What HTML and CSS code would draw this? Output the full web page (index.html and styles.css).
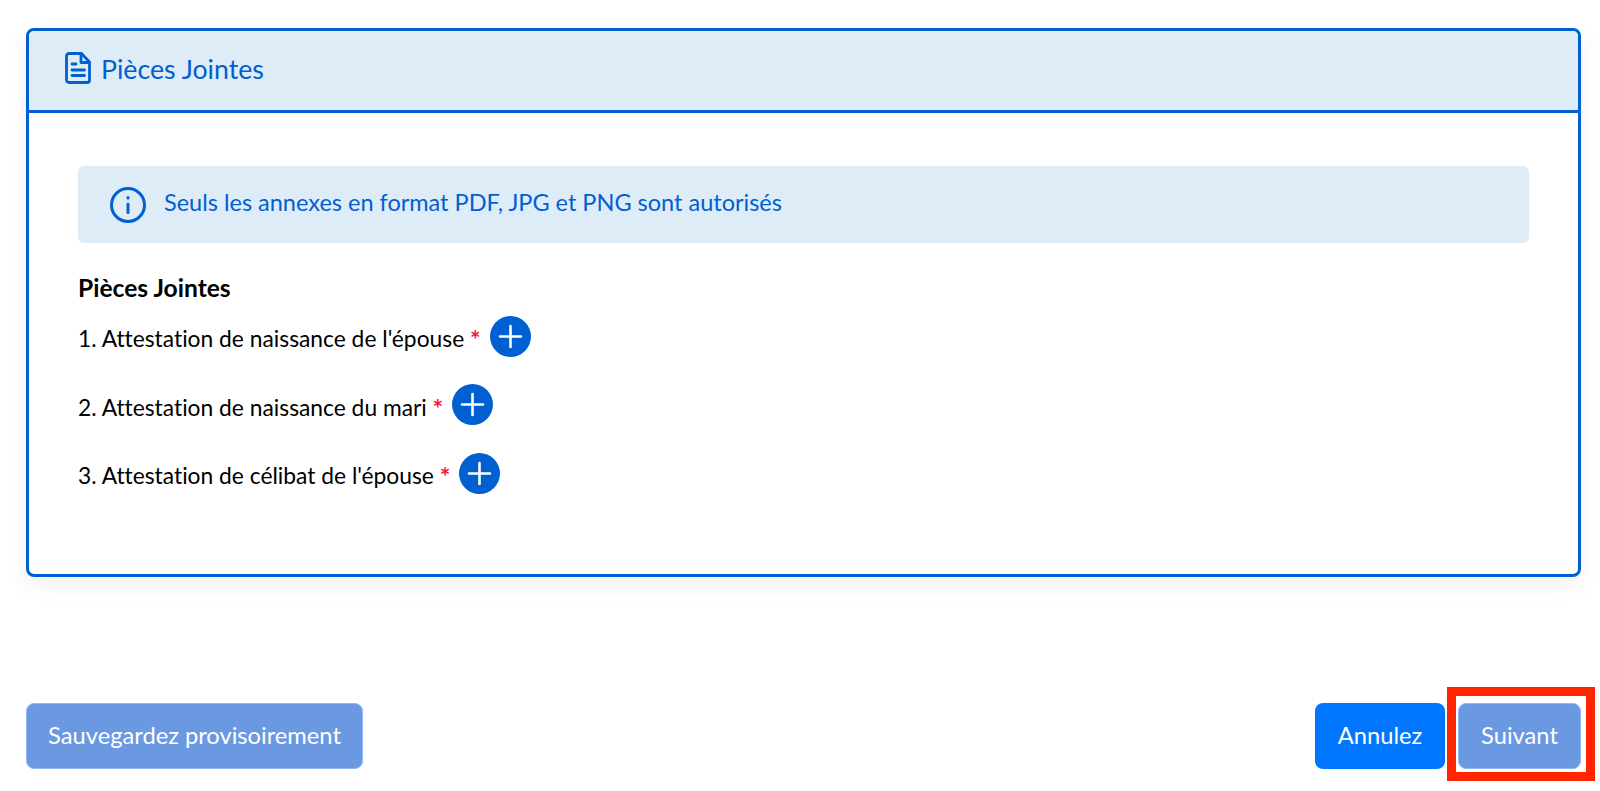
FILE: index.html
```html
<!DOCTYPE html>
<html lang="fr">
<head>
    <meta charset="UTF-8">
    <meta name="viewport" content="width=device-width, initial-scale=1.0">
    <title>Pièces Jointes</title>
    <link rel="stylesheet" href="styles.css">
</head>
<body>
    <div class="card">
        <div class="card-header">
            <svg class="doc-icon" width="26" height="32" viewBox="0 0 26 32" fill="none" stroke="#0060d1" stroke-width="2.8" stroke-linecap="round" stroke-linejoin="round">
                <path d="M4 1.500h12.500L24.500 10v18a2.500 2.500 0 0 1-2.500 2.500H4A2.500 2.500 0 0 1 1.500 28V4A2.500 2.500 0 0 1 4 1.500z"/>
                <path d="M16 2v8.500h8"/>
                <path d="M7 12h4M7 18h12.500M7 23.500h12.500"/>
            </svg>
            <span class="card-title">Pièces Jointes</span>
        </div>
        <div class="card-body">
            <div class="alert">
                <svg class="info-icon" width="38" height="38" viewBox="0 0 38 38" fill="none" stroke="#0060d1" stroke-width="3" stroke-linecap="round">
                    <circle cx="19" cy="19" r="16.500"/>
                    <path d="M19 18v8.500"/>
                    <path d="M19 11.500v.5"/>
                </svg>
                <span class="alert-text">Seuls les annexes en format PDF, JPG et PNG sont autorisés</span>
            </div>
            <h2 class="section-title">Pièces Jointes</h2>
            <ul class="attachments">
                <li><span>1. Attestation de naissance de l'épouse <em>*</em></span><button class="add-btn" aria-label="Ajouter"><svg width="25" height="25" viewBox="0 0 25 25" stroke="#fff" stroke-width="2.600" stroke-linecap="round"><path d="M12.500 2v21M2 12.500h21"/></svg></button></li>
                <li><span>2. Attestation de naissance du mari <em>*</em></span><button class="add-btn" aria-label="Ajouter"><svg width="25" height="25" viewBox="0 0 25 25" stroke="#fff" stroke-width="2.600" stroke-linecap="round"><path d="M12.500 2v21M2 12.500h21"/></svg></button></li>
                <li><span>3. Attestation de célibat de l'épouse <em>*</em></span><button class="add-btn" aria-label="Ajouter"><svg width="25" height="25" viewBox="0 0 25 25" stroke="#fff" stroke-width="2.600" stroke-linecap="round"><path d="M12.500 2v21M2 12.500h21"/></svg></button></li>
            </ul>
        </div>
    </div>
    <div class="footer">
        <button class="btn btn-muted btn-save">Sauvegardez provisoirement</button>
        <div class="footer-right">
            <button class="btn btn-primary btn-cancel">Annulez</button>
            <div class="highlight">
                <button class="btn btn-muted btn-next">Suivant</button>
            </div>
        </div>
    </div>
</body>
</html>
```

FILE: styles.css
```css
body {
    font-family: Lato, "Open Sans", Arial, sans-serif;
    font-variant-ligatures: none;
    background-color: #fff;
    color: #000;
    margin: 0;
    padding: 28px 19px 0 26px;
    height: 791px;
    box-sizing: border-box;
    overflow: hidden;
}
.card {
    height: 549px;
    box-sizing: border-box;
    border: 3px solid #0060d1;
    border-radius: 8px;
    box-shadow: 0 8px 24px rgba(0, 0, 0, 0.06);
    overflow: hidden;
}
.card-header {
    height: 82px;
    box-sizing: border-box;
    display: flex;
    align-items: center;
    gap: 10px;
    padding: 0 0 3px 36px;
    background: #deecf8;
    border-bottom: 3px solid #0060d1;
}
.doc-icon {
    flex-shrink: 0;
    margin-top: -3px;
}
.card-title {
    font-size: 26.700px;
    color: #0060d1;
}
.card-body {
    padding: 53px 49px 0;
}
.alert {
    height: 77px;
    display: flex;
    align-items: center;
    gap: 17px;
    padding-left: 31px;
    background: #deecf8;
    border-radius: 6px;
    color: #0060d1;
    font-size: 23.500px;
}
.alert-text {
    margin-bottom: 6px;
}
.info-icon {
    flex-shrink: 0;
}
.section-title {
    font-size: 24.600px;
    font-weight: 700;
    margin: 30px 0 0;
    line-height: 30px;
}
.attachments {
    list-style-type: none;
    margin: 0;
    padding: 1px 0 0;
    font-size: 22.800px;
}
.attachments li {
    height: 68.500px;
    display: flex;
    align-items: center;
    gap: 9px;
}
.attachments em {
    color: #f5133f;
    font-style: normal;
    font-weight: 700;
    font-size: 25px;
    line-height: 1;
    vertical-align: -2px;
}
.add-btn {
    width: 41px;
    height: 41px;
    padding: 0;
    border: none;
    border-radius: 50%;
    background-color: #0060d1;
    display: flex;
    align-items: center;
    justify-content: center;
    margin-top: -4px;
}
.footer {
    display: flex;
    justify-content: space-between;
    margin-top: 126px;
}
.footer-right {
    display: flex;
    gap: 13px;
}
.btn {
    height: 66px;
    border-radius: 8px;
    color: #fff;
    font-family: inherit;
    font-size: 23.700px;
    padding: 0 0 2px;
    cursor: pointer;
}
.btn-muted {
    background-color: #6a99e2;
    border: 1px solid #8fbaf5;
}
.btn-primary {
    background-color: #0177ff;
    border: none;
}
.btn-save {
    width: 337px;
}
.btn-cancel {
    width: 130px;
}
.btn-next {
    width: 123px;
}
.highlight {
    position: relative;
}
.highlight::after {
    content: "";
    position: absolute;
    top: -16px;
    bottom: -12px;
    left: -11px;
    right: -14px;
    border: 9px solid #ff2500;
    pointer-events: none;
}
```
